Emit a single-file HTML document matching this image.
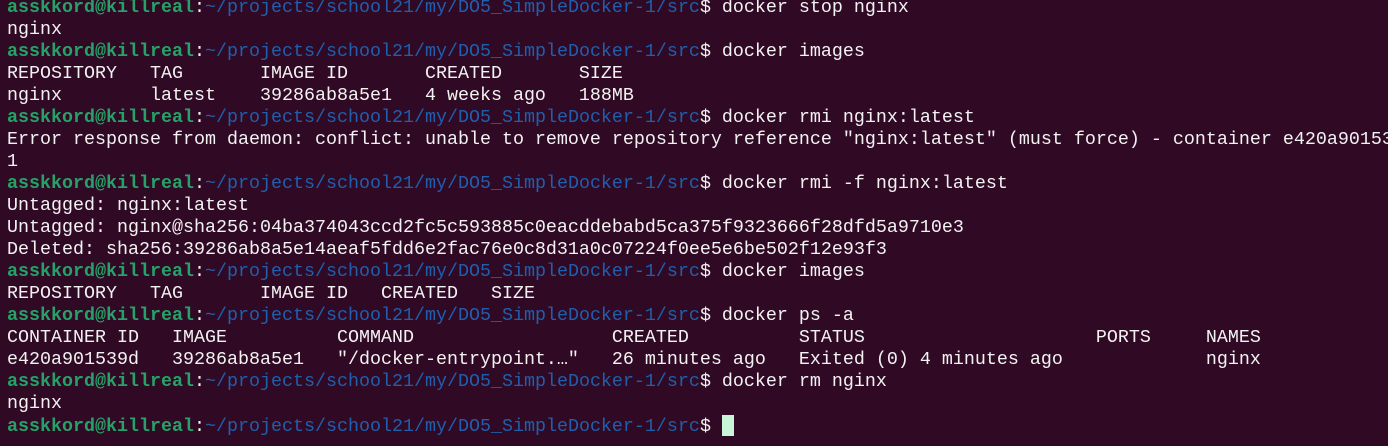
<!DOCTYPE html>
<html><head><meta charset="utf-8"><style>
html,body{margin:0;padding:0;background:#300a24;width:1388px;height:446px;overflow:hidden}
pre{margin:0;position:absolute;left:7px;top:-3px;font-family:"Liberation Mono",monospace;font-size:18.33px;line-height:22px;color:#f2f2f2;white-space:pre}
.g{color:#26a269;font-weight:bold}.b{color:#1f5fae}
.c{display:inline-block;width:12px;height:21px;background:#c9f5d8;vertical-align:-5px}
</style></head><body><pre><span class="g">asskkord@killreal</span>:<span class="b">~/projects/school21/my/DO5_SimpleDocker-1/src</span>$ docker stop nginx
nginx
<span class="g">asskkord@killreal</span>:<span class="b">~/projects/school21/my/DO5_SimpleDocker-1/src</span>$ docker images
REPOSITORY   TAG       IMAGE ID       CREATED       SIZE
nginx        latest    39286ab8a5e1   4 weeks ago   188MB
<span class="g">asskkord@killreal</span>:<span class="b">~/projects/school21/my/DO5_SimpleDocker-1/src</span>$ docker rmi nginx:latest
Error response from daemon: conflict: unable to remove repository reference "nginx:latest" (must force) - container e420a901539d
1
<span class="g">asskkord@killreal</span>:<span class="b">~/projects/school21/my/DO5_SimpleDocker-1/src</span>$ docker rmi -f nginx:latest
Untagged: nginx:latest
Untagged: nginx@sha256:04ba374043ccd2fc5c593885c0eacddebabd5ca375f9323666f28dfd5a9710e3
Deleted: sha256:39286ab8a5e14aeaf5fdd6e2fac76e0c8d31a0c07224f0ee5e6be502f12e93f3
<span class="g">asskkord@killreal</span>:<span class="b">~/projects/school21/my/DO5_SimpleDocker-1/src</span>$ docker images
REPOSITORY   TAG       IMAGE ID   CREATED   SIZE
<span class="g">asskkord@killreal</span>:<span class="b">~/projects/school21/my/DO5_SimpleDocker-1/src</span>$ docker ps -a
CONTAINER ID   IMAGE          COMMAND                  CREATED          STATUS                     PORTS     NAMES
e420a901539d   39286ab8a5e1   "/docker-entrypoint.…"   26 minutes ago   Exited (0) 4 minutes ago             nginx
<span class="g">asskkord@killreal</span>:<span class="b">~/projects/school21/my/DO5_SimpleDocker-1/src</span>$ docker rm nginx
nginx
<span class="g">asskkord@killreal</span>:<span class="b">~/projects/school21/my/DO5_SimpleDocker-1/src</span>$ <span class="c"></span></pre></body></html>
